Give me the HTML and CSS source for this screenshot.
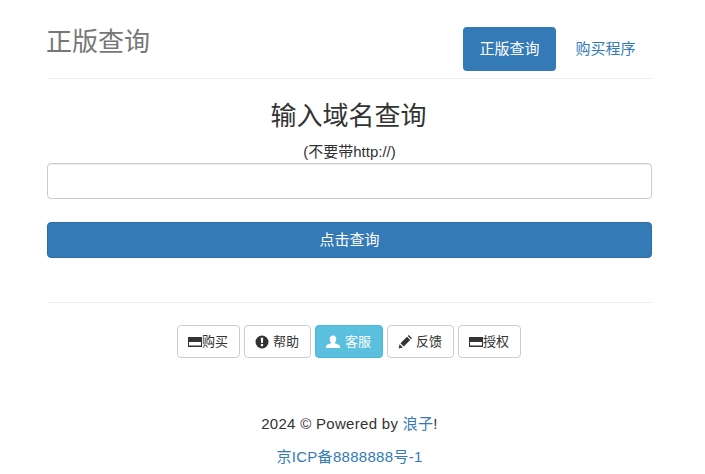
FILE: index.html
```html
<!DOCTYPE html>
<html lang="zh">
<head>
<meta charset="utf-8">
<title>正版查询</title>
<link rel="stylesheet" href="styles.css">
</head>
<body>
<div class="container">
  <header class="header">
    <h3 class="title">正版查询</h3>
    <nav class="pills">
      <a class="pill active" href="#">正版查询</a>
      <a class="pill" href="#">购买程序</a>
    </nav>
  </header>
  <main class="main">
    <h2 class="heading">输入域名查询</h2>
    <label class="hint" for="domain">(不要带http://)</label>
    <input class="input" id="domain" type="text">
    <button class="submit" type="button">点击查询</button>
  </main>
  <div class="toolbar">
    <a class="btn" href="#"><svg class="icon" viewBox="0 0 14 14"><path d="M0 2h14v10H0z" fill="#333"/><path d="M1 7h12v3.500H1z" fill="#fff"/></svg>购买</a>
    <a class="btn spaced" href="#"><svg class="icon" viewBox="0 0 14 14"><circle cx="7" cy="7" r="6.500" fill="#333"/><path d="M5.800 2.800h2.400l-.3 5.200H6.100z M5.900 9h2.200v2.200H5.900z" fill="#fff"/></svg>帮助</a>
    <a class="btn info spaced" href="#"><svg class="icon" viewBox="0 0 14 14"><path d="M7 .5c2 0 3.300 1.500 3.300 3.500S9.400 7.300 8.700 8c0 .8 5.300 1.200 5.300 3.500V13H0v-1.500C0 9.200 5.300 8.800 5.300 8 4.600 7.300 3.700 6 3.700 4S5 .5 7 .5z" fill="#fff"/></svg>客服</a>
    <a class="btn spaced" href="#"><svg class="icon" viewBox="0 0 14 14"><path d="M.6 13.400l1-4.200 3.200 3.200z M2.500 8.300L9 1.800l3.200 3.200-6.500 6.500z M9.800 1l1-1 3.200 3.200-1 1z" fill="#333"/></svg>反馈</a>
    <a class="btn" href="#"><svg class="icon" viewBox="0 0 14 14"><path d="M0 2h14v10H0z" fill="#333"/><path d="M1 7h12v3.500H1z" fill="#fff"/></svg>授权</a>
  </div>
  <footer class="footer">
    <p class="copy">2024 © Powered by <a href="#">浪子</a>!</p>
    <p class="icp"><a href="#">京ICP备8888888号-1</a></p>
  </footer>
</div>
</body>
</html>
```
FILE: styles.css
```css
* { box-sizing: border-box; }
html, body { margin: 0; padding: 0; background: #fff; }
body {
  font-family: "Liberation Sans", "Noto Sans CJK SC", sans-serif;
  font-size: 14px;
  line-height: 20px;
  color: #333;
}
a { color: #337ab7; text-decoration: none; }
.container { width: 605px; margin-left: 47px; }
.header {
  display: flex;
  justify-content: space-between;
  align-items: flex-start;
  height: 79px;
  padding-top: 28px;
  border-bottom: 1px solid #eee;
}
.title {
  margin: 0 0 0 -1px;
  font-size: 26px;
  font-weight: 400;
  line-height: 28px;
  color: #777;
}
.pills { display: flex; gap: 3px; margin-top: -1px; }
.pill {
  display: block;
  width: 93px;
  height: 44px;
  padding: 12px 0;
  text-align: center;
  font-size: 15px;
  line-height: 20px;
  border-radius: 4px;
}
.pill.active { background: #337ab7; color: #fff; }
.main { padding-top: 20px; display: flex; flex-direction: column; align-items: center; }
.heading {
  margin: 0 2px 0 0;
  font-size: 26px;
  font-weight: 400;
  line-height: 34px;
  color: #333;
}
.hint { margin-top: 9px; font-size: 15px; line-height: 20px; }
.input {
  display: block;
  width: 100%;
  height: 36px;
  margin-top: 1px;
  border: 1px solid #ccc;
  border-radius: 4px;
  box-shadow: inset 0 1px 1px rgba(0,0,0,.075);
  background: #fff;
}
.submit {
  display: block;
  width: 100%;
  height: 36px;
  margin-top: 23px;
  border: 1px solid #2e6da4;
  border-radius: 4px;
  background: #337ab7;
  color: #fff;
  font: inherit;
  font-size: 15px;
}
.toolbar {
  display: flex;
  justify-content: center;
  gap: 4px;
  margin-top: 44px;
  padding: 22px 1px 0 0;
  border-top: 1px solid #eee;
}
.btn {
  display: flex;
  align-items: center;
  height: 33px;
  padding: 0 11px 0 10px;
  border: 1px solid #ccc;
  border-radius: 4px;
  color: #333;
  background: #fff;
  font-size: 13px;
}
.btn.info { background: #5bc0de; border-color: #46b8da; color: #fff; }
.icon { width: 14px; height: 14px; flex: none; }
.spaced .icon { margin-right: 4px; }
.spaced.info .icon { margin-right: 5px; }
.footer { margin-top: 56px; text-align: center; font-size: 15px; letter-spacing: .3px; }
.footer p { margin: 0; }
.footer .icp { margin-top: 13px; }
```
